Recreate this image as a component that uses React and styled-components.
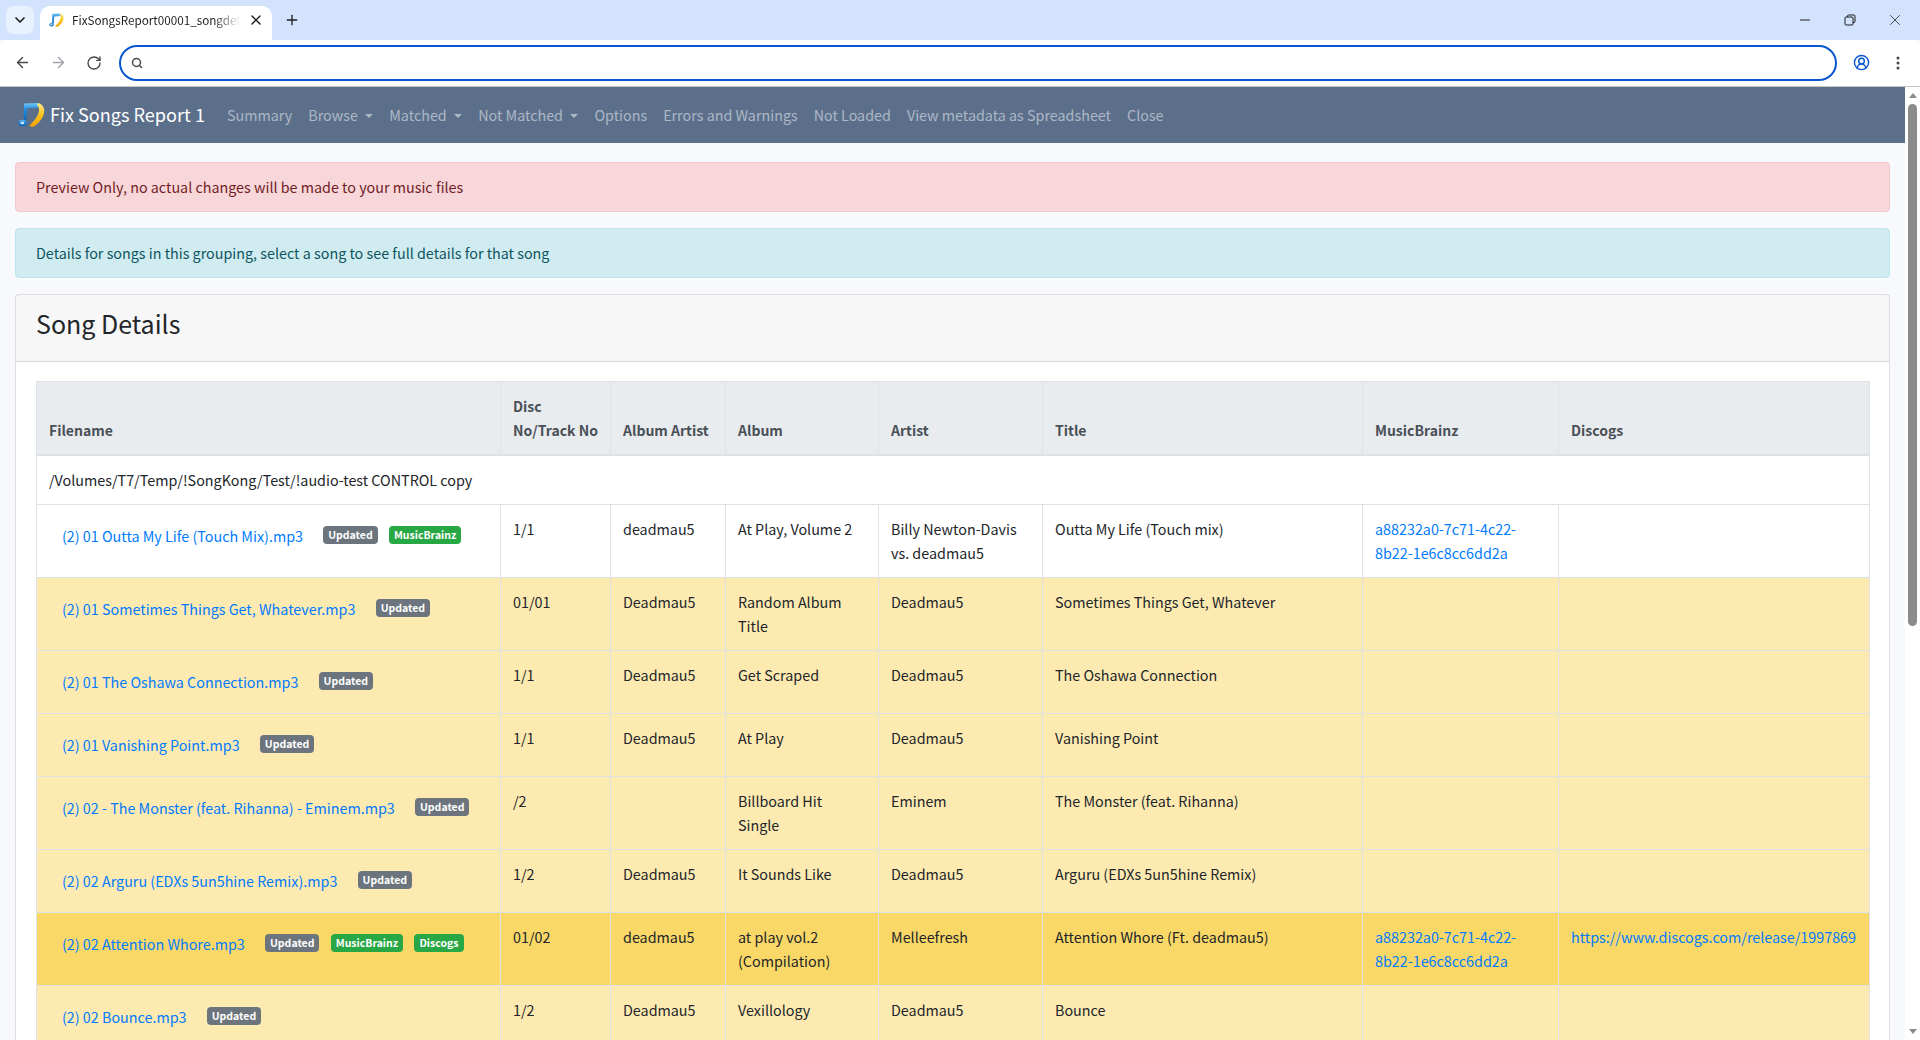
import React from 'react';
import styled, { createGlobalStyle } from 'styled-components';
import { ArrowLeft, ArrowRight, RotateCw, Search, CircleUserRound, Plus, X, ChevronDown } from 'lucide-react';

const FONT = '"Noto Sans CJK JP", "Noto Sans", sans-serif';

const Global = createGlobalStyle`
  html, body { margin: 0; padding: 0; height: 100%; overflow: hidden; }
  body { font-family: ${FONT}; font-size: 14.33px; line-height: 24px; color: #212529; background: #f8f9fc; }
  * { box-sizing: border-box; }
  a { text-decoration: none; color: #007bff; }
`;

const Frame = styled.div`
  height: 100vh;
  display: flex;
  flex-direction: column;
  overflow: hidden;
`;

const TabStrip = styled.div`
  height: 40px;
  flex: none;
  background: #d3e3fd;
  display: flex;
  align-items: flex-end;
  padding-left: 6px;
`;
const TabSearch = styled.div`
  width: 28px;
  height: 28px;
  margin-bottom: 6px;
  border-radius: 8px;
  background: #e8f0fe;
  display: flex;
  align-items: center;
  justify-content: center;
  color: #1f1f1f;
`;
const Tab = styled.div`
  width: 232px;
  height: 34px;
  margin-left: 6px;
  background: #fff;
  border-radius: 10px 10px 0 0;
  display: flex;
  align-items: center;
  padding: 0 8px 6px 9px;
  gap: 8px;
`;
const TabTitle = styled.div`
  flex: 1;
  font-size: 11.7px;
  line-height: 16px;
  color: #1f1f1f;
  white-space: nowrap;
  overflow: hidden;
  -webkit-mask-image: linear-gradient(to right, #000 85%, transparent);
  mask-image: linear-gradient(to right, #000 85%, transparent);
`;
const NewTab = styled.div`
  width: 28px;
  height: 28px;
  margin: 0 0 6px 6px;
  display: flex;
  align-items: center;
  justify-content: center;
  color: #1f1f1f;
`;
const WindowControls = styled.div`
  margin-left: auto;
  align-self: stretch;
  display: flex;
  padding-right: 3px;
`;
const WinButton = styled.div`
  width: 45px;
  height: 40px;
  display: flex;
  align-items: center;
  justify-content: center;
  color: #1f1f1f;
`;

const Toolbar = styled.div`
  height: 47px;
  flex: none;
  background: #fff;
  border-bottom: 1px solid #c7c7c7;
  border-radius: 8px 8px 0 0;
  display: flex;
  align-items: center;
  padding: 0 6px 1px 4px;
`;
const ToolButton = styled.div`
  width: ${p => p.$wide ? 36 : 32}px;
  height: 32px;
  margin-left: ${p => p.$gap || 0}px;
  display: flex;
  align-items: center;
  justify-content: center;
  color: ${p => p.$muted ? '#a0a3a7' : p.$blue ? '#0b57d0' : '#474747'};
`;
const Omnibox = styled.div`
  flex: 1;
  height: 36px;
  margin: 0 8px 0 7px;
  border: 2px solid #0b57d0;
  border-radius: 18px;
  display: flex;
  align-items: center;
  padding-left: 10px;
  color: #474747;
`;

const Viewport = styled.div`
  flex: 1;
  min-height: 0;
  display: flex;
`;
const Page = styled.div`
  flex: 1;
  min-width: 0;
  overflow: hidden;
  background: #f8f9fc;
`;
const Scrollbar = styled.div`
  width: 15px;
  flex: none;
  background: #fff;
  display: flex;
  flex-direction: column;
  align-items: center;
  padding-top: 6px;
`;
const ArrowUp = styled.div`
  width: 0; height: 0;
  border-left: 4px solid transparent;
  border-right: 4px solid transparent;
  border-bottom: 5px solid #8b8b8b;
`;
const ArrowDown = styled.div`
  width: 0; height: 0;
  margin-top: auto;
  margin-bottom: 6px;
  border-left: 4px solid transparent;
  border-right: 4px solid transparent;
  border-top: 5px solid #8b8b8b;
`;
const Thumb = styled.div`
  width: 9px;
  height: 522px;
  margin-top: 6px;
  border-radius: 5px;
  background: #8b8b8b;
`;

const Navbar = styled.nav`
  height: 56px;
  background: #5b6f8b;
  display: flex;
  align-items: center;
  padding: 0 18px;
`;
const Brand = styled.div`
  display: flex;
  align-items: center;
  gap: 5px;
  font-size: 18.1px;
  color: #fff;
  margin-right: 14px;
  padding-bottom: 2px;
  white-space: nowrap;
`;
const NavLink = styled.a`
  padding: 0 8px;
  color: rgba(255, 255, 255, 0.5);
  white-space: nowrap;
  &::after {
    ${p => p.$caret ? `content: ''; display: inline-block; margin-left: 7.4px; vertical-align: 3px;
    border-top: 4.8px solid; border-left: 4.8px solid transparent; border-right: 4.8px solid transparent;` : ''}
  }
`;

const Content = styled.main`
  padding: 19px 15px 0;
`;
const Alert = styled.div`
  padding: 12px 20px;
  margin-bottom: 16px;
  border: 1px solid ${p => p.$tone === 'danger' ? '#f5c6cb' : '#bee5eb'};
  border-radius: 4px;
  color: ${p => p.$tone === 'danger' ? '#721c24' : '#0c5460'};
  background: ${p => p.$tone === 'danger' ? '#f8d7da' : '#d1ecf1'};
`;
const Card = styled.section`
  background: #fff;
  border: 1px solid rgba(0, 0, 0, 0.125);
  border-radius: 4px;
`;
const CardHeader = styled.header`
  padding: 12px 20px;
  background: rgba(0, 0, 0, 0.03);
  border-bottom: 1px solid rgba(0, 0, 0, 0.125);
`;
const Heading = styled.h3`
  margin: 0 0 9.6px;
  font-size: 25px;
  font-weight: 400;
  line-height: 32px;
`;
const CardBody = styled.div`
  padding: 19px 20px 20px;
`;
const Table = styled.table`
  width: 100%;
  table-layout: fixed;
  border-collapse: collapse;
  border: 1px solid #dee2e6;
`;
const Th = styled.th`
  padding: 12px;
  text-align: left;
  vertical-align: bottom;
  font-size: 14px;
  font-weight: 700;
  white-space: nowrap;
  color: #495057;
  background: #e9ecef;
  border: 1px solid #dee2e6;
  border-bottom-width: 2px;
`;
const Row = styled.tr`
  background: ${p => p.$tone === 'strong' ? '#f9d868' : p.$tone === 'light' ? '#fdeab1' : '#fff'};
`;
const Td = styled.td`
  padding: 12px;
  vertical-align: top;
  border: 1px solid #dee2e6;
  overflow-wrap: break-word;
`;
const FileLink = styled.a`
  display: inline-block;
  padding: 7px 13px;
`;
const Badge = styled.span`
  display: inline-block;
  margin: 0 4px;
  padding: 3px 5px;
  font-size: 10.5px;
  font-weight: 700;
  line-height: 12px;
  border-radius: 4px;
  color: #fff;
  vertical-align: 3px;
  background: ${p => p.$green ? '#28a745' : '#6c757d'};
`;

const NoteIcon = ({ width, id }) => (
  <svg width={width} viewBox="0 0 27 25">
    <defs>
      <linearGradient id={`${id}b`} x1="0" y1="0" x2="0" y2="1">
        <stop offset="0" stopColor="#6fc8f5" />
        <stop offset="0.3" stopColor="#2a8fe0" />
        <stop offset="1" stopColor="#0e5fb0" />
      </linearGradient>
      <linearGradient id={`${id}y`} x1="0" y1="0" x2="0" y2="1">
        <stop offset="0" stopColor="#ffe98a" />
        <stop offset="0.5" stopColor="#fcc419" />
        <stop offset="1" stopColor="#f0a000" />
      </linearGradient>
    </defs>
    <path d="M6 1.5 L20 1 L21 5.5 L9.6 6.2 L8.2 20.5 L5.6 20 Z" fill={`url(#${id}b)`} />
    <ellipse cx="4.6" cy="21" rx="4.2" ry="3.3" fill={`url(#${id}b)`} />
    <ellipse cx="4.4" cy="21" rx="2" ry="1.2" fill="#cfe9fb" />
    <path d="M20 1 C25 2 27 7 26 11 C25 17 19 23 15 25 L11 24 C15 20 20 15 21 9 C21.4 6 20.5 4 19 3 Z" fill={`url(#${id}y)`} />
  </svg>
);

const RestoreIcon = () => (
  <svg width="12" height="12" viewBox="0 0 12 12" fill="none" stroke="#1f1f1f" strokeWidth="1">
    <rect x="1" y="3" width="8" height="8" rx="1" />
    <path d="M3.5 3V2a1 1 0 0 1 1-1H10a1 1 0 0 1 1 1v5.5a1 1 0 0 1-1 1H9" />
  </svg>
);
const DotsIcon = () => (
  <svg width="16" height="16" viewBox="0 0 16 16" fill="#474747">
    <circle cx="8" cy="3" r="1.5" /><circle cx="8" cy="8" r="1.5" /><circle cx="8" cy="13" r="1.5" />
  </svg>
);
const MinIcon = () => (
  <svg width="12" height="12" viewBox="0 0 12 12" stroke="#1f1f1f"><path d="M1 6h10" /></svg>
);

const MBID = 'a88232a0-7c71-4c22-8b22-1e6c8cc6dd2a';
const COLS = [464, 110, 115, 153, 164, 320, 196, 311];
const HEAD = ['Filename', <>Disc<br />No/Track No</>, 'Album Artist', 'Album', 'Artist', 'Title', 'MusicBrainz', 'Discogs'];
const ROWS = [
  { tone: '', file: '(2) 01 Outta My Life (Touch Mix).mp3', mb: true, no: '1/1', aa: 'deadmau5', album: 'At Play, Volume 2', artist: 'Billy Newton-Davis vs. deadmau5', title: 'Outta My Life (Touch mix)' },
  { tone: 'light', file: '(2) 01 Sometimes Things Get, Whatever.mp3', no: '01/01', aa: 'Deadmau5', album: 'Random Album Title', artist: 'Deadmau5', title: 'Sometimes Things Get, Whatever' },
  { tone: 'light', file: '(2) 01 The Oshawa Connection.mp3', no: '1/1', aa: 'Deadmau5', album: 'Get Scraped', artist: 'Deadmau5', title: 'The Oshawa Connection' },
  { tone: 'light', file: '(2) 01 Vanishing Point.mp3', no: '1/1', aa: 'Deadmau5', album: 'At Play', artist: 'Deadmau5', title: 'Vanishing Point' },
  { tone: 'light', file: '(2) 02 - The Monster (feat. Rihanna) - Eminem.mp3', no: '/2', aa: '', album: 'Billboard Hit Single', artist: 'Eminem', title: 'The Monster (feat. Rihanna)' },
  { tone: 'light', file: '(2) 02 Arguru (EDXs 5un5hine Remix).mp3', no: '1/2', aa: 'Deadmau5', album: 'It Sounds Like', artist: 'Deadmau5', title: 'Arguru (EDXs 5un5hine Remix)' },
  { tone: 'strong', file: '(2) 02 Attention Whore.mp3', mb: true, dc: true, no: '01/02', aa: 'deadmau5', album: 'at play vol.2 (Compilation)', artist: 'Melleefresh', title: 'Attention Whore (Ft. deadmau5)' },
  { tone: 'light', file: '(2) 02 Bounce.mp3', no: '1/2', aa: 'Deadmau5', album: 'Vexillology', artist: 'Deadmau5', title: 'Bounce' },
];

export default function App() {
  return (
    <Frame>
      <Global />
      <TabStrip>
        <TabSearch><ChevronDown size={16} strokeWidth={2.5} /></TabSearch>
        <Tab>
          <NoteIcon width={15} id="fav" />
          <TabTitle>FixSongsReport00001_songdetails</TabTitle>
          <X size={16} color="#1f1f1f" strokeWidth={2} />
        </Tab>
        <NewTab><Plus size={16} strokeWidth={2} /></NewTab>
        <WindowControls>
          <WinButton><MinIcon /></WinButton>
          <WinButton><RestoreIcon /></WinButton>
          <WinButton><X size={18} strokeWidth={1} /></WinButton>
        </WindowControls>
      </TabStrip>
      <Toolbar>
        <ToolButton $wide><ArrowLeft size={17} strokeWidth={2} /></ToolButton>
        <ToolButton $wide $muted><ArrowRight size={17} strokeWidth={2} /></ToolButton>
        <ToolButton $wide><RotateCw size={16} strokeWidth={2} /></ToolButton>
        <Omnibox><Search size={12} strokeWidth={3} /></Omnibox>
        <ToolButton $blue><CircleUserRound size={17} strokeWidth={2} /></ToolButton>
        <ToolButton $gap={5}><DotsIcon /></ToolButton>
      </Toolbar>
      <Viewport>
        <Page>
          <Navbar>
            <Brand><NoteIcon width={27} id="logo" />Fix Songs Report 1</Brand>
            <NavLink>Summary</NavLink>
            <NavLink $caret>Browse</NavLink>
            <NavLink $caret>Matched</NavLink>
            <NavLink $caret>Not Matched</NavLink>
            <NavLink>Options</NavLink>
            <NavLink>Errors and Warnings</NavLink>
            <NavLink>Not Loaded</NavLink>
            <NavLink>View metadata as Spreadsheet</NavLink>
            <NavLink>Close</NavLink>
          </Navbar>
          <Content>
            <Alert $tone="danger">Preview Only, no actual changes will be made to your music files</Alert>
            <Alert $tone="info">Details for songs in this grouping, select a song to see full details for that song</Alert>
            <Card>
              <CardHeader><Heading>Song Details</Heading></CardHeader>
              <CardBody>
                <Table>
                  <colgroup>{COLS.map((w, i) => <col key={i} style={{ width: w }} />)}</colgroup>
                  <thead>
                    <tr>{HEAD.map((h, i) => <Th key={i}>{h}</Th>)}</tr>
                  </thead>
                  <tbody>
                    <Row><Td colSpan={8}>/Volumes/T7/Temp/!SongKong/Test/!audio-test CONTROL copy</Td></Row>
                    {ROWS.map(r => (
                      <Row key={r.file} $tone={r.tone}>
                        <Td>
                          <FileLink>{r.file}</FileLink>{' '}
                          <Badge>Updated</Badge>{' '}
                          {r.mb && <Badge $green>MusicBrainz</Badge>}{' '}
                          {r.dc && <Badge $green>Discogs</Badge>}
                        </Td>
                        <Td>{r.no}</Td>
                        <Td>{r.aa}</Td>
                        <Td>{r.album}</Td>
                        <Td>{r.artist}</Td>
                        <Td>{r.title}</Td>
                        <Td>{r.mb && <a>{MBID}</a>}</Td>
                        <Td>{r.dc && <a>https://www.discogs.com/release/1997869</a>}</Td>
                      </Row>
                    ))}
                  </tbody>
                </Table>
              </CardBody>
            </Card>
          </Content>
        </Page>
        <Scrollbar>
          <ArrowUp />
          <Thumb />
          <ArrowDown />
        </Scrollbar>
      </Viewport>
    </Frame>
  );
}
